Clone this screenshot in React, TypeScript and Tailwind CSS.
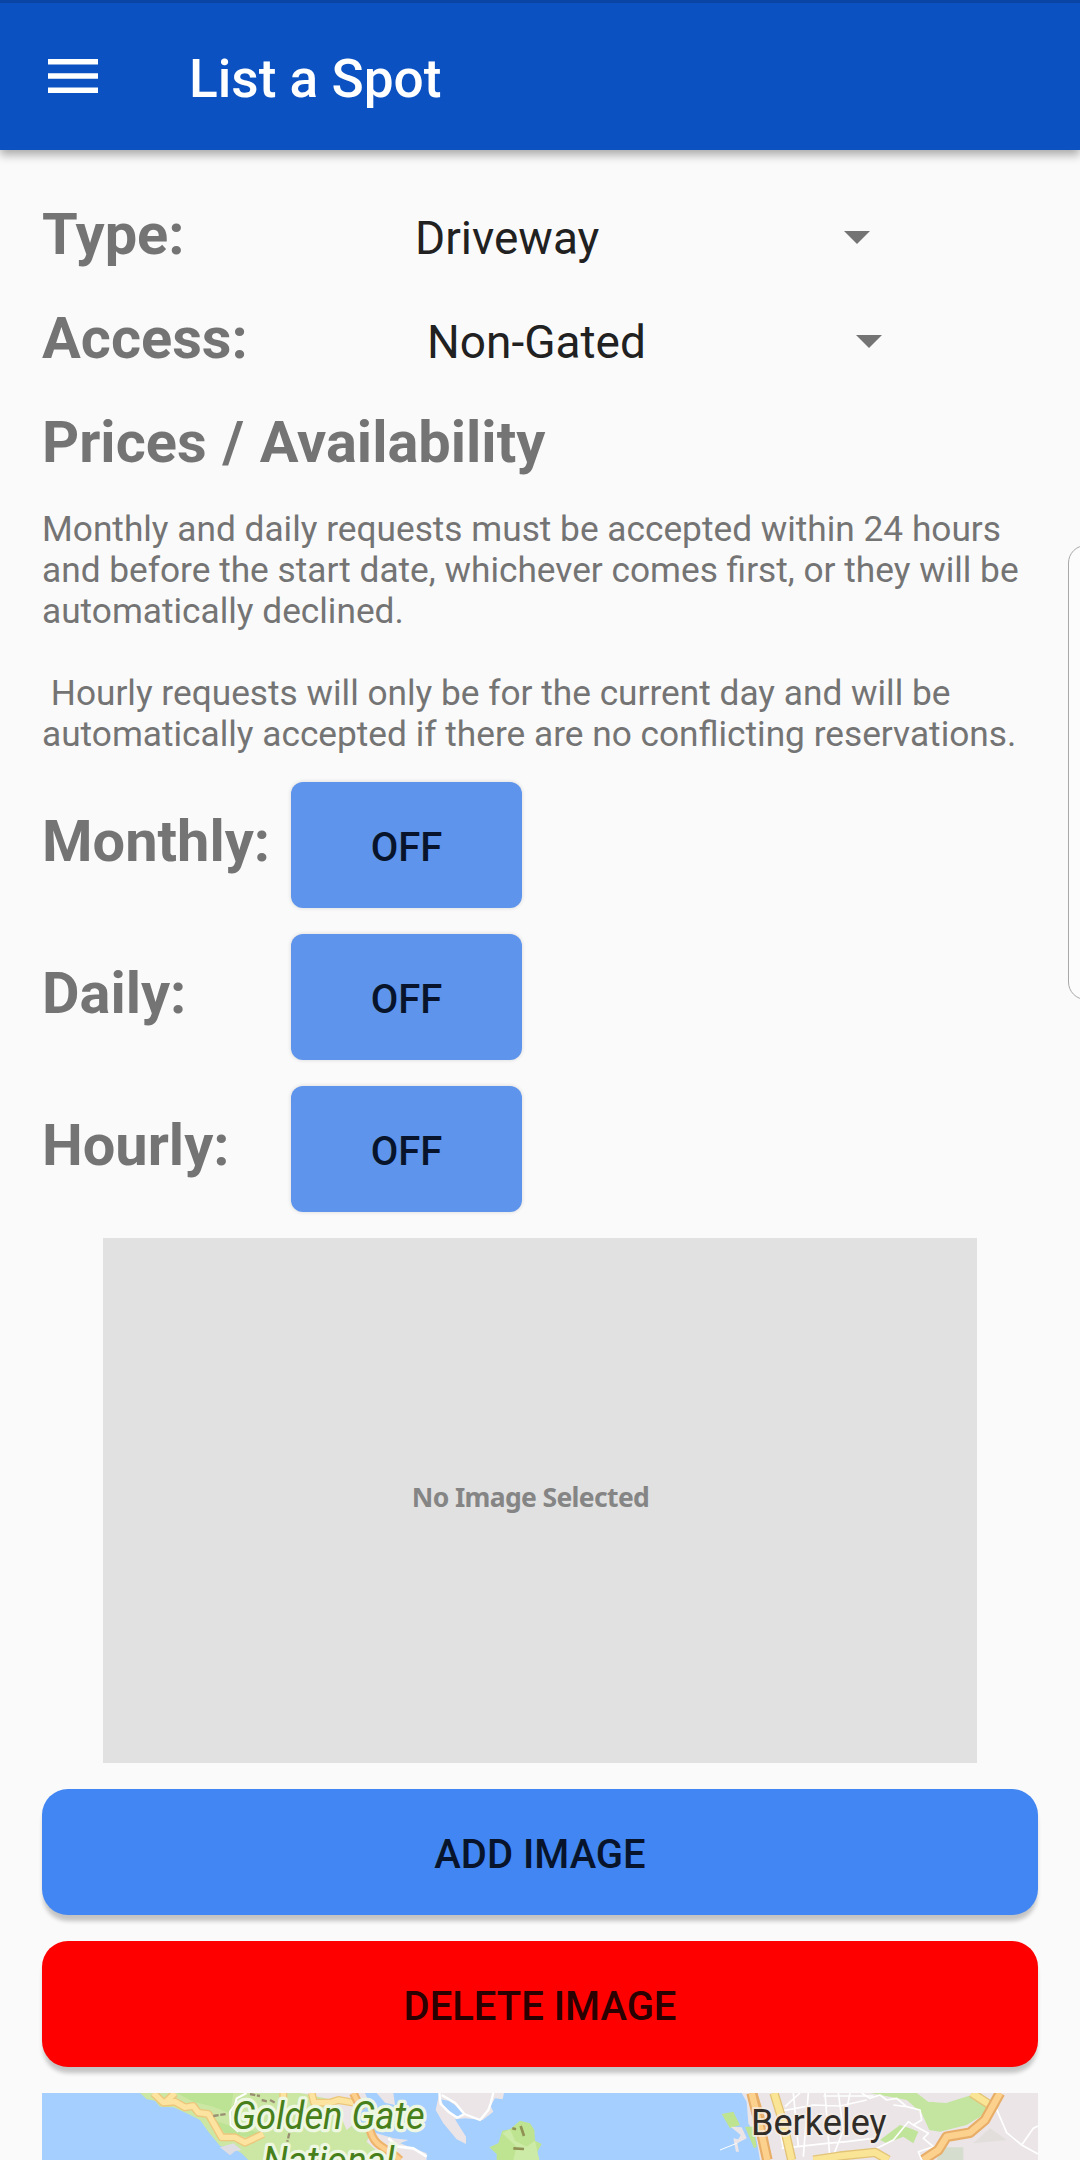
import React from "react";

function SelectRow({ label, value, gap, width }: { label: string; value: string; gap: string; width: string }) {
  return (
    <div className="flex h-[104px] items-center">
      <h2 className={"text-[57.75px] leading-[68px] font-bold text-[#747474] " + width}>{label}</h2>
      <div className={"flex items-center justify-between pt-[7px] " + gap}>
        <span className="text-[46px] leading-[56px] text-[#212121]">{value}</span>
        <svg className="h-[13px] w-[26px]" viewBox="0 0 26 13">
          <path d="M0 0H26L13 13Z" fill="#747474" />
        </svg>
      </div>
    </div>
  );
}

function ToggleRow({ label }: { label: string }) {
  return (
    <div className="flex h-[126px] items-center">
      <h2 className="w-[249px] pb-2 text-[57.75px] leading-[68px] font-bold whitespace-nowrap text-[#747474]">{label}</h2>
      <button className="h-[126px] w-[231px] rounded-[12px] bg-[#5e94ec] pt-[5px] text-[40px] font-medium text-[#07142b] shadow-[0_0_4px_rgba(0,0,0,0.14)]">
        OFF
      </button>
    </div>
  );
}

function BayMap() {
  return (
    <svg className="block h-[67px] w-[996px] overflow-hidden" viewBox="126 69 2988 201" fill="none" strokeLinejoin="round">
      <rect x="126" y="69" width="2988" height="201" fill="#a5cfff" />
      {/* Marin headlands */}
      <path d="M420 69L440 88 465 92 480 110 520 112 560 130 600 150 625 185 660 228 700 235 725 250 745 270H1270L1210 225 1170 200 1120 205 1090 180 1060 120 1105 108 1090 69Z" fill="#cbe7a3" />
      <path d="M530 69H700L690 130 640 110 580 95Z" fill="#bce293" />
      <path d="M640 150L700 170 790 190 740 200 680 195Z" fill="#bce293" />
      <path d="M900 69H1095L1110 105 1060 110 1075 150 1040 180 1000 90Z" fill="#ebe5e7" />
      <path d="M660 232L700 220 725 240 705 244 690 256Z" fill="#dedde3" />
      <path d="M1115 185L1180 205 1225 210 1200 220 1280 250V270H1160L1100 215Z" fill="#ebe5e7" />
      <path d="M1130 69L1180 69 1185 105 1155 98Z" fill="#ebe5e7" />
      <g stroke="#ecc77c" strokeWidth="24">
        <path d="M460 69L490 98 525 95 555 112 580 108 595 128 625 132 665 202 705 202 735 218 790 192" />
        <path d="M495 98L525 69M850 69V100M935 69L942 98 990 98 1015 90 1060 98" />
      </g>
      <g stroke="#fce3a0" strokeWidth="16">
        <path d="M460 69L490 98 525 95 555 112 580 108 595 128 625 132 665 202 705 202 735 218 790 192" />
        <path d="M495 98L525 69M850 69V100M935 69L942 98 990 98 1015 90 1060 98" />
      </g>
      <path d="M1060 69L1085 120M1110 180C1125 235 1160 230 1200 270" stroke="#efb46c" strokeWidth="26" />
      <path d="M1060 69L1085 120M1110 180C1125 235 1160 230 1200 270" stroke="#fccf8c" strokeWidth="14" />
      <path d="M740 69L710 85 705 105 690 125 692 165 715 185" stroke="#fff" strokeWidth="6" />
      <path d="M1165 205L1195 230 1240 235 1280 260" stroke="#fff" strokeWidth="8" />
      <path d="M750 72L780 78M785 90L805 95M640 138L680 132M868 190L862 215M875 270L900 262 990 266M810 90L825 98" stroke="#998f72" strokeWidth="7" strokeDasharray="16 5" />
      {/* Tiburon and Angel Island */}
      <path d="M1318 69H1512L1508 88 1485 85 1472 108 1480 125 1448 150 1395 145 1365 148 1398 200 1398 222 1370 208 1330 160 1307 120Z" fill="#ebe5e7" />
      <path d="M1322 88L1330 105 1345 120 1370 143 1393 132 1365 105 1345 92Z" fill="#a5cfff" />
      <path d="M1318 69L1322 102 1345 125 1372 143 1393 132 1365 98 1325 75M1393 132L1440 150 1465 120 1472 100 1480 69" stroke="#fff" strokeWidth="7" />
      <path d="M1560 152L1590 160 1603 180 1605 212 1625 222 1610 248 1618 270H1490V252L1468 232 1495 220 1507 182 1530 178Z" fill="#bfe491" />
      <path d="M1530 178L1545 212 1580 230 1605 212 1618 270H1540L1550 230 1507 190Z" fill="#cceba6" />
      <path d="M1537 175L1548 178M1562 168L1572 198M1540 235L1572 237" stroke="#8f9155" strokeWidth="8" />
      {/* East Bay */}
      <path d="M2225 69L2240 95 2245 160 2268 200 2280 270H3114V69Z" fill="#ebe5e7" />
      <path d="M2165 132L2200 125 2220 165 2190 175ZM2235 170L2260 170 2270 230 2262 235Z" fill="#bfe491" />
      <path d="M2192 170L2225 172 2240 205 2212 220 2217 245 2208 245 2200 205 2215 208 2222 195Z" fill="#ebe5e7" />
      <path d="M2610 69H2755L2785 95 2840 98 2915 75 2990 110 2900 165 2820 185 2788 180 2765 130 2720 90Z" fill="#c4e5a0" />
      <path d="M2750 69H2915L2840 98 2785 95Z" fill="#ebe5e7" />
      <path d="M2640 210L2700 165 2730 175 2755 185 2740 220 2710 200 2660 220Z" fill="#c1e49b" />
      <path d="M2820 232H2890V270H2810Z" fill="#d5ddce" />
      <path d="M2920 220L2970 175 3020 210Z" fill="#e2dedb" />
      <g stroke="#fff" strokeWidth="5">
        <path d="M2335 125L2440 105 2520 108 2600 90M2345 235L2480 220 2540 215 2620 205M2380 69L2395 230M2425 69L2410 260M2475 69L2490 270M2515 69L2530 180 2495 270M2550 69L2540 120M2320 75L2350 235M2355 110L2400 69M2470 78H2620" />
        <path d="M2585 69L2610 85 2640 75 2660 90 2690 85 2720 110 2760 120 2765 150 2740 165 2725 155 2680 210 2625 238M2740 165L2785 190 2770 205 2800 230 2755 245 2765 270M2720 110L2680 105M2990 118L3020 188 3065 225 3114 252M3065 225L3100 175 3114 168" />
        <path d="M2160 240L2210 220" strokeWidth="3" />
      </g>
      <path d="M2322 69L2350 160 2375 270M2440 270L2520 258 2625 247 2665 270M2915 69L2990 118" stroke="#e3c477" strokeWidth="28" />
      <path d="M2322 69L2350 160 2375 270M2440 270L2520 258 2625 247 2665 270M2915 69L2990 118" stroke="#fae496" strokeWidth="20" />
      <path d="M2255 69L2280 170 2302 270M3000 69L2955 150 2910 188 2840 200 2815 240 2770 270" stroke="#e8ae68" strokeWidth="32" />
      <path d="M2255 69L2280 170 2302 270M3000 69L2955 150 2910 188 2840 200 2815 240 2770 270" stroke="#fcd18e" strokeWidth="19" />
      <path d="M2270 69L2300 170" stroke="#e8ae68" strokeWidth="5" />
      <g fontSize="117" fontStyle="italic" fill="#477f1b" stroke="#eef7e2" strokeWidth="20" paintOrder="stroke">
        <text x="696" y="178" textLength="578" lengthAdjust="spacingAndGlyphs">Golden Gate</text>
        <text x="788" y="311" textLength="395" lengthAdjust="spacingAndGlyphs">National</text>
      </g>
      <text x="2253" y="196" fontSize="113" textLength="407" lengthAdjust="spacingAndGlyphs" fill="#302c28" stroke="#f5eee9" strokeWidth="12" strokeOpacity="0.7" paintOrder="stroke">
        Berkeley
      </text>
    </svg>
  );
}

export default function App() {
  return (
    <div className="relative h-[2160px] w-[1080px] overflow-hidden bg-[#fafafa] font-['Roboto',sans-serif]">
      <header className="flex h-[150px] items-center border-t-[3px] border-[#0a44a4] bg-[#0b51c1] pl-12 shadow-[0_5px_9px_rgba(0,0,0,0.32)]">
        <svg className="mb-[1px] h-[34px] w-[50px]" viewBox="0 0 50 34" fill="#fff">
          <rect y="0" width="50" height="5.5" />
          <rect y="14.25" width="50" height="5.5" />
          <rect y="28.5" width="50" height="5.5" />
        </svg>
        <h1 className="ml-[91px] pt-[5px] text-[53.2px] leading-[62px] font-medium text-white">List a Spot</h1>
      </header>

      <main className="px-[42px] pt-8">
        <SelectRow label="Type:" value="Driveway" width="w-[373px]" gap="w-[455px]" />
        <SelectRow label="Access:" value="Non-Gated" width="w-[385px]" gap="w-[455px]" />
        <div className="flex h-[104px] items-center">
          <h2 className="text-[57.75px] leading-[68px] font-bold [word-spacing:1.5px] text-[#747474]">Prices / Availability</h2>
        </div>

        <p className="mt-[15px] h-[246px] text-[35.25px] leading-[41px] whitespace-pre text-[#747474]">
          {"Monthly and daily requests must be accepted within 24 hours\nand before the start date, whichever comes first, or they will be\nautomatically declined.\n\n Hourly requests will only be for the current day and will be\nautomatically accepted if there are no conflicting reservations."}
        </p>

        <div className="mt-[27px] flex flex-col gap-[26px]">
          <ToggleRow label="Monthly:" />
          <ToggleRow label="Daily:" />
          <ToggleRow label="Hourly:" />
        </div>

        <div className="mx-auto mt-[26px] flex h-[525px] w-[874px] items-center justify-center bg-[#e1e1e1] pr-[19px] pb-[5px]">
          <span className="font-['Noto_Sans'] text-[26.5px] font-bold tracking-[-0.65px] text-[#858585]">No Image Selected</span>
        </div>

        <div className="mt-[26px] flex flex-col gap-[26px]">
          <button className="h-[126px] rounded-[26px] bg-[#4286f3] pt-[5px] text-[40px] font-medium text-[#07142b] shadow-[0_7px_4px_-1px_rgba(0,0,0,0.22)]">
            ADD IMAGE
          </button>
          <button className="h-[126px] rounded-[26px] bg-[#ff0000] pt-[5px] text-[40px] font-medium text-[#2b0000] shadow-[0_7px_4px_-1px_rgba(0,0,0,0.22)]">
            DELETE IMAGE
          </button>
          <BayMap />
        </div>
      </main>

      {/* Edge panel handle */}
      <div className="absolute top-[545px] -right-6 h-[455px] w-9 rounded-[18px] border border-[#a8a8a8] bg-[#fcfcfc]" />
    </div>
  );
}
